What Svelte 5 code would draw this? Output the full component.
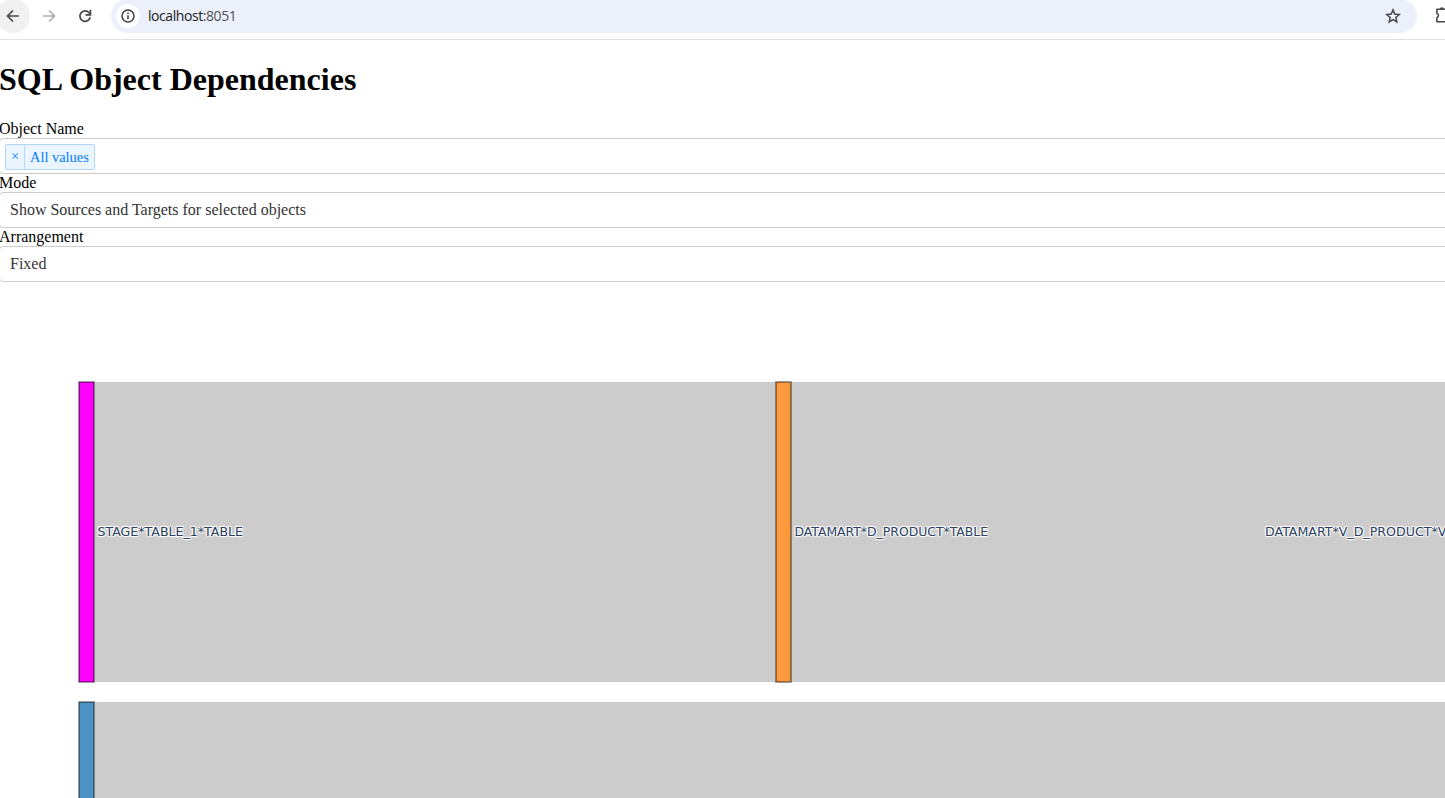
<script>
  const nodes = [
    { x: 79, y: 100, height: 300, color: '#ff00ff' },
    { x: 776, y: 100, height: 300, color: '#ff993e' },
    { x: 79, y: 420, height: 300, color: '#4c92c3' }
  ];
  const links = [
    { x: 94, y: 100, width: 682, height: 300 },
    { x: 791, y: 100, width: 700, height: 300 },
    { x: 94, y: 420, width: 1400, height: 300 }
  ];
  const labels = [
    { x: 97.5, text: 'STAGE*TABLE_1*TABLE', width: 145.5 },
    { x: 794.5, text: 'DATAMART*D_PRODUCT*TABLE', width: 193.5 },
    { x: 1265, text: 'DATAMART*V_D_PRODUCT*VIEW', width: 205.5 }
  ];
</script>

<div class="window">
  <header class="toolbar">
    <div class="nav">
      <button class="back" aria-label="Back">
        <svg width="16" height="16" viewBox="0 0 16 16"><path d="M13.8 8H2.6M8 2.5 2.5 8 8 13.5" fill="none" stroke="#46484b" stroke-width="1.7" /></svg>
      </button>
      <button class="forward" aria-label="Forward">
        <svg width="16" height="16" viewBox="0 0 16 16"><path d="M2.2 8h11.2M8 2.5 13.5 8 8 13.5" fill="none" stroke="#acaeb0" stroke-width="1.7" /></svg>
      </button>
      <button class="reload" aria-label="Reload">
        <svg width="16" height="16" viewBox="0 0 16 16"><path d="M13.2 9.3A5.2 5.2 0 1 1 12 4.7L13.3 6" fill="none" stroke="#46484b" stroke-width="1.7" /><path d="M13.4 1.8v5H8.5" fill="none" stroke="#46484b" stroke-width="1.7" /></svg>
      </button>
    </div>
    <div class="address">
      <span class="info">
        <svg width="16" height="16" viewBox="0 0 16 16"><circle cx="8" cy="8" r="6" fill="none" stroke="#3c3e41" stroke-width="1.5" /><path d="M8 7.2v4M8 4.6v1.5" stroke="#3c3e41" stroke-width="1.5" /></svg>
      </span>
      <span class="url">localhost<span class="port">:8051</span></span>
      <svg class="star" width="16" height="16" viewBox="0 0 16 16"><path d="m8 1.9 1.7 4.2 4.5.4-3.4 3 1 4.5L8 11.6 4.2 14l1-4.5-3.4-3 4.5-.4z" fill="none" stroke="#46484b" stroke-width="1.5" /></svg>
    </div>
    <svg class="extensions" width="18" height="20" viewBox="0 0 18 20"><path d="M1.9 4.3h10.6v4.2a2 2 0 0 1 0 4v4.2H1.9v-4a2.2 2.2 0 0 0 0-4.2z" fill="none" stroke="#46484b" stroke-width="1.6" stroke-linejoin="round" /><path d="M4.9 4.3a2 2 0 0 1 4 0z" fill="#46484b" /></svg>
  </header>

  <main>
    <h1>SQL Object Dependencies</h1>
    <div class="label">Object Name</div>
    <div class="select"><div class="chip"><span class="remove">×</span><span class="value">All values</span></div></div>
    <div class="label">Mode</div>
    <div class="select"><span class="single">Show Sources and Targets for selected objects</span></div>
    <div class="label">Arrangement</div>
    <div class="select"><span class="single">Fixed</span></div>

    <svg class="sankey" width="1445" height="516" viewBox="0 0 1445 516">
      {#each links as link}
        <rect x={link.x} y={link.y} width={link.width} height={link.height} fill="#ccc" />
      {/each}
      {#each nodes as node}
        <rect x={node.x} y={node.y} width="15" height={node.height} fill={node.color} stroke="#000" stroke-opacity="0.38" stroke-width="2" />
      {/each}
      {#each labels as label}
        <text x={label.x} y="254" textLength={label.width} lengthAdjust="spacingAndGlyphs">{label.text}</text>
      {/each}
    </svg>
  </main>
</div>

<style>
  :global(body) { margin: 0; background: #fff; overflow: hidden; }
  .window { width: 1445px; height: 798px; overflow: hidden; color: #000; font: 16px/18px "Liberation Serif", "Times New Roman", serif; }
  .toolbar { box-sizing: border-box; height: 40px; display: flex; align-items: flex-start; border-bottom: 1px solid #e0e2e4; overflow: hidden; }
  .nav { display: flex; width: 111px; flex: none; }
  button { display: flex; align-items: center; justify-content: center; flex: none; width: 34px; height: 34px; margin: -1px 2px 0 0; padding: 0; border: 0; border-radius: 50%; background: none; }
  .back { margin-left: -4px; background: #f1f1f1; }
  .address { display: flex; align-items: center; box-sizing: border-box; width: 1306px; height: 34px; margin-top: -1px; padding: 0 16px 0 5px; border-radius: 17px; background: #ecf0fa; flex: none; }
  .info { display: flex; align-items: center; justify-content: center; width: 24px; height: 24px; border-radius: 50%; background: #fff; }
  .url { margin-left: 8px; font: 14px/20px "Open Sans", "Noto Sans", sans-serif; letter-spacing: -0.43px; color: #202124; }
  .port { color: #505357; }
  .star { margin-left: auto; }
  .extensions { flex: none; margin: 5px 0 0 18px; }
  h1 { margin: 21px 0 22px -1px; font-size: 32px; line-height: 37px; font-weight: bold; }
  .label { height: 18px; margin-left: -1px; }
  .select { box-sizing: border-box; display: flex; align-items: center; width: 1460px; height: 36px; margin-left: -1px; border: 1px solid #ccc; border-radius: 4px; color: #333; }
  .single { padding-left: 10px; font-size: 16px; }
  .chip { box-sizing: border-box; display: flex; height: 26px; margin: 1px 0 0 5px; border: 1px solid #b3d6fd; border-radius: 2px; background: #ebf5ff; color: #007eff; font-size: 14.4px; line-height: 24px; }
  .remove { width: 18px; border-right: 1px solid #b3d6fd; text-align: center; line-height: 22px; }
  .value { padding: 0 5px; }
  .sankey { display: block; }
  text { font: 12px "DejaVu Sans", Verdana, sans-serif; fill: #2a3f5f; text-shadow: 1px 1px 1px #fff, -1px -1px 1px #fff, 1px -1px 1px #fff, -1px 1px 1px #fff; }
</style>
